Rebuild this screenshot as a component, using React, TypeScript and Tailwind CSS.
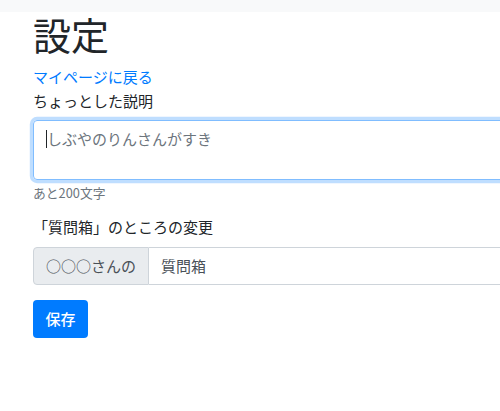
export default function App() {
  return (
    <div className="h-[411px] w-[500px] overflow-hidden bg-white font-['Noto_Sans_CJK_JP','Noto_Sans',sans-serif] text-[#212529]">
      <div className="h-3 bg-[#f8f9fa]" />
      <div className="w-[580px] pl-[33px]">
        <h1 className="-mt-0.5 mb-[7px] text-[38px] font-normal leading-[48px]">設定</h1>
        <a href="#" className="block text-[15px] leading-6 text-[#007bff]">
          マイページに戻る
        </a>
        <label className="mb-[7px] block text-[15px] leading-6">ちょっとした説明</label>
        <div className="flex h-[60px] items-start rounded-[4px] border border-[#80bdff] px-3 py-1.5 shadow-[0_0_0_3.2px_rgba(0,123,255,0.25)]">
          <span className="mt-[3px] h-[18px] w-px bg-[#212529]" />
          <span className="text-[15px] leading-6 text-[#6c757d]">しぶやのりんさんがすき</span>
        </div>
        <p className="mt-[3px] text-[12.8px] leading-[19px] text-[#6c757d]">あと200文字</p>
        <label className="mb-2 mt-[13px] block text-[15px] leading-6">「質問箱」のところの変更</label>
        <div className="flex h-[38px] text-[15px]">
          <span className="flex items-center rounded-l-[4px] border border-[#ced4da] bg-[#e9ecef] px-3 text-[#495057]">
            ○○○さんの
          </span>
          <span className="flex flex-1 items-center rounded-r-[4px] border border-l-0 border-[#ced4da] px-3 text-[#495057]">
            質問箱
          </span>
        </div>
        <button className="mt-[15px] h-[38px] w-[55px] rounded-[4px] bg-[#007bff] text-[15px] font-medium text-white">
          保存
        </button>
      </div>
    </div>
  );
}
